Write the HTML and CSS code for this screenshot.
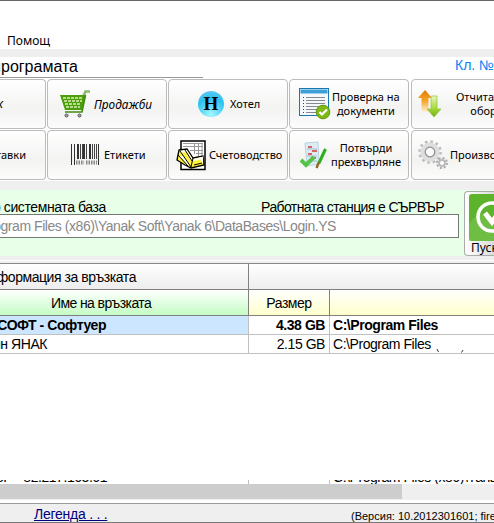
FILE: index.html
```html
<!DOCTYPE html>
<html lang="bg">
<head>
<meta charset="utf-8">
<title>Yanak Soft</title>
<link rel="stylesheet" href="styles.css">
</head>
<body>
<div class="window">
  <nav class="menu"><span>Помощ</span></nav>
  <div class="strip"></div>
  <header class="head">
    <div class="head-title"><span>програмата</span></div>
    <div class="client">Кл. №</div>
  </header>
  <section class="tools">
    <button class="tool first stock"><em>к</em></button>
    <button class="tool sales">
      <svg width="30" height="28" viewBox="0 0 30 28"><path d="M23.500 6L25.500 1.500H30" fill="none" stroke="#8dba66" stroke-width="2.600"/><path d="M0 5H26L22 20H5Z" fill="#4c9e0d"/><path d="M3 8H23M4 11H22M5 14H21M6 17H20" stroke="#d9f3b4" stroke-width="1.500" stroke-dasharray="3 1"/><path d="M5 22H22L25.500 5" fill="none" stroke="#438b10" stroke-width="1.600"/><circle cx="6.500" cy="25.500" r="1.500" fill="#aaa" stroke="#555"/><circle cx="19.500" cy="25.500" r="1.500" fill="#aaa" stroke="#555"/></svg>
      <em>Продажби</em></button>
    <button class="tool hotel">
      <span class="ball">H</span>
      <span>Хотел</span></button>
    <button class="tool check">
      <svg width="32" height="32" viewBox="0 0 32 32"><rect x=".5" y=".5" width="29" height="27" fill="#f5f8fa" stroke="#1878b0"/><rect x="1.500" y="1.500" width="27" height="4" fill="#3d9fd8"/><path d="M7 9.500H26M7 12.500H26M7 15.500H26M7 18.500H22M7 21.500H18M7 24.500H17" stroke="#85898d"/><path d="M4.500 9V26" stroke="#345" stroke-dasharray="1 2"/><circle cx="24" cy="24" r="6.800" fill="#7fba13" stroke="#5d9808"/><path d="M20.500 24l2.500 2.500 5-5" fill="none" stroke="#fff" stroke-width="2.200"/></svg>
      <span>Проверка на<br>документи</span></button>
    <button class="tool report">
      <svg width="24" height="30" viewBox="0 0 24 30"><defs><linearGradient id="o" x2="0" y2="1"><stop stop-color="#e07c00"/><stop offset=".5" stop-color="#f6a62c"/><stop offset="1" stop-color="#fff1d8"/></linearGradient><linearGradient id="g" x2="0" y2="1"><stop stop-color="#e9f6bf"/><stop offset=".6" stop-color="#a5d936"/><stop offset="1" stop-color="#6cae18"/></linearGradient></defs><path d="M7 1L14 9H10.500V23H3.500V9H0Z" fill="url(#o)"/><path d="M13 7H19V20H23L16 28L9 20H13Z" fill="url(#g)" stroke="#8fc23b" stroke-width=".7"/></svg>
      <span>Отчитане на<br>оборот</span></button>
    <button class="tool first"><span>Доставки</span></button>
    <button class="tool labels">
      <svg width="29" height="22" viewBox="0 0 29 22"><path d="M.5 0V21M3.500 0V21M27.500 0V21" stroke="#333"/><path d="M7 0V15M13 0V15M19 0V15" stroke="#333" stroke-width="2"/><path d="M9.500 0V15M11.500 0V15M15.500 0V15M21.500 0V15M23.500 0V15M25.500 0V15" stroke="#444"/><path d="M5 18.500H13M15 18.500H26" stroke="#888" stroke-width="4" stroke-dasharray="1.500 1"/></svg>
      <span>Етикети</span></button>
    <button class="tool account">
      <svg width="30" height="31" viewBox="0 0 30 31"><rect x="5" y="1" width="24" height="28.500" fill="#fff" stroke="#000" stroke-width="1.500"/><path d="M7 3.500H27M7 6.500H27M14 10.500H27M20 13.500H27M18.500 3V14M22.500 3V18M26 3V20" stroke="#999"/><path d="M3 10L11 9L17 18L27 16L28 25L15 28L9 25L1 20Z" fill="#fff23a" stroke="#000" stroke-width="1.300"/><path d="M5 12L10 11L16 20M3 18L7 17L13 25M18 20L26 18L26 23" fill="none" stroke="#fff" stroke-width="2.200"/><path d="M4 11L15 27L17 18M2 15l10 11M18 25l8-2M9 10l7 11" fill="none" stroke="#000"/></svg>
      <span>Счетоводство</span></button>
    <button class="tool confirm">
      <svg width="28" height="28" viewBox="0 0 28 28"><path d="M5 2L18 1L19 23L7 25Z" fill="#dcebf5" stroke="#a4c2d8" stroke-width=".7"/><path d="M8 6h4M12 10h5M8 13h4M11 17h5" stroke="#d43c2c" stroke-width="1.600"/><path d="M7 8h10M7 15h10M8 20h9" stroke="#a5bccb"/><path d="M1 19L6 24L14 16" fill="none" stroke="#55c446" stroke-width="4"/><path d="M25.500 8L19 22" stroke="#25b21c" stroke-width="3"/><path d="M19 21L16.500 27" stroke="#8b6a20" stroke-width="2.500"/></svg>
      <span>Потвърди<br>прехвърляне</span></button>
    <button class="tool produce">
      <svg width="32" height="30" viewBox="0 0 32 30"><circle cx="13" cy="12" r="10.500" fill="none" stroke="#bcbcbc" stroke-width="2.600" stroke-dasharray="2.600 2.900"/><circle cx="13" cy="12" r="7" fill="none" stroke="#dedede" stroke-width="5"/><circle cx="13" cy="12" r="4.800" fill="#fafafa" stroke="#8c8c8c" stroke-width="1.200"/><circle cx="25" cy="23" r="5" fill="none" stroke="#aaa" stroke-width="2" stroke-dasharray="2 1.900"/><circle cx="25" cy="23" r="3" fill="#fff" stroke="#bbb" stroke-width="2"/></svg>
      <span>Производство</span></button>
  </section>
  <section class="base">
    <div class="base-main">
      <div class="captions"><div class="base-name"><span>до системната база</span></div><span class="station">Работната станция е СЪРВЪР</span></div>
      <div class="path"><span>C:\Program Files (x86)\Yanak Soft\Yanak 6\DataBases\Login.YS</span></div>
    </div>
    <button class="start">
      <svg width="46" height="47" viewBox="0 0 46 47"><rect width="46" height="47" rx="3" fill="#5db32b"/><path d="M0 30Q10 14 22 24L40 47H0Z" fill="#84c85e" opacity=".5"/><circle cx="23" cy="23" r="14" fill="none" stroke="#fff" stroke-width="3.500"/><path d="M16 19L23 28L34 13" fill="none" stroke="#fff" stroke-width="5"/></svg>
      <span>Пускане</span></button>
  </section>
  <section class="grid">
    <div class="row bands"><div class="c1"><span>Информация за връзката</span></div><div class="rest"></div></div>
    <div class="row heads"><div class="c1 green"><span>Име на връзката</span></div><div class="c2"><span>Размер</span></div><div class="c3"></div></div>
    <div class="row data sel"><div class="c1"><b>ЯНАК СОФТ - Софтуер</b></div><div class="c2"><b>4.38 GB</b></div><div class="c3"><b>C:\Program Files</b></div></div>
    <div class="row data"><div class="c1"><span>Магазин ЯНАК</span></div><div class="c2">2.15 GB</div><div class="c3 tailed"><span>C:\Program Files</span><svg width="30" height="4" viewBox="0 0 30 4"><path d="M1 0L2.500 3M27 1L25.500 3.500" stroke="#333" fill="none"/></svg></div></div>
    <div class="blank"></div>
    <div class="row cut"><div class="c1"><span>СЪРВЪР - 82.217.163.61</span></div><div class="c2"></div><div class="c3"><span>C:\Program Files (x86)\Yanak</span></div></div>
  </section>
  <div class="scroll"><div class="thumb"></div></div>
  <footer class="foot"><a class="legend">Легенда . . .</a><span class="ver">(Версия: 10.2012301601; firebird</span></footer>
</div>
</body>
</html>
```
FILE: styles.css
```css
* { box-sizing: border-box; }
body { margin: 0; background: #fff; color: #000; font-family: "Liberation Sans", sans-serif; }
.window { width: 494px; height: 523px; overflow: hidden; background: #efefef; display: flex; flex-direction: column; }
.window span, .window b, .window em { white-space: nowrap; }
.menu { height: 49px; flex: none; border-top: 1px solid #666; background: #fff; padding: 32px 0 0 7px; font: 12px/16px "Noto Sans", sans-serif; }
.strip { height: 8px; flex: none; background: #efefef; }
.head { height: 22px; flex: none; background: #fff; display: flex; justify-content: space-between; }
.head-title { width: 203px; height: 21px; border-bottom: 1px solid #999; display: flex; justify-content: flex-end; padding-right: 125px; font-size: 16px; line-height: 20px; }
.client { width: 39px; font-size: 14px; line-height: 17px; color: #0a82f5; white-space: nowrap; }
.tools { height: 102px; flex: none; display: grid; grid-template-columns: 46px 120px 120px 120px 140px; grid-template-rows: 50px 50px; column-gap: 1px; row-gap: 1px; background: #fff; }
.tool { margin: 0; padding: 0; border: 1px solid #bcbcbc; border-radius: 4px; background: linear-gradient(#fff, #f3f3f2 60%, #fcfcfc); display: flex; align-items: center; font: 11px/14px "Noto Sans", sans-serif; color: #000; text-align: center; overflow: hidden; }
.tool svg { flex: none; }
.tool.first { border-left: 0; border-radius: 0 4px 4px 0; justify-content: flex-end; padding-right: 19px; }
.tool.stock { padding-right: 42px; font-size: 12px; }
.sales { padding-left: 12px; gap: 4px; font-size: 11.8px; }
.hotel { padding-left: 29px; gap: 6px; }
.ball { width: 26px; height: 26px; border-radius: 50%; background: radial-gradient(circle at 50% 90%, #a5f8ff, #2cc2ef 60%, #75c8f5); font: bold 19px/26px "Liberation Serif", serif; }
.check { padding-left: 9px; gap: 1px; }
.report { margin-left: 1px; padding-left: 6px; gap: 14px; }
.labels { padding-left: 23px; gap: 4px; }
.account { padding-left: 7px; gap: 3px; }
.confirm { padding-left: 10px; gap: 3px; }
.produce { margin-left: 1px; padding-left: 5px; gap: 1px; }
.base { height: 66px; flex: none; margin-top: 9px; background: #e8ffe8; display: flex; justify-content: space-between; }
.base-main { width: 459px; padding-top: 9px; }
.captions { display: flex; justify-content: space-between; font-size: 14px; letter-spacing: -.6px; line-height: 16px; height: 15px; padding-right: 15px; }
.base-name { width: 106px; display: flex; justify-content: flex-end; letter-spacing: -.4px; }
.path { height: 24px; border: 1px solid #777; border-left: 0; background: #fff; color: #888; font-size: 14px; letter-spacing: -.45px; line-height: 22px; display: flex; justify-content: flex-end; padding-right: 122px; }
.start { margin: 1px 0 0; width: 30px; height: 65px; padding: 2px 0 0 4px; border: 1px solid #aaa; border-right: 0; border-radius: 4px 0 0 4px; background: linear-gradient(90deg, #fff, #dcdcdc); overflow: hidden; display: flex; flex-direction: column; font: 12px/14px "Noto Sans", sans-serif; color: #000; flex: none; align-items: flex-start; }
.start svg { flex: none; }
.start span { padding-left: 2px; }
.grid { margin-top: 7px; height: 221px; flex: none; border-top: 1px solid #888; background: #fff; font-size: 14px; letter-spacing: -.45px; display: flex; flex-direction: column; box-shadow: 0 -2px #efefef, 0 -3px #fff; }
.row { display: grid; grid-template-columns: 249px 81px 164px; flex: none; }
.row > div { border-right: 1px solid #808080; overflow: hidden; }
.row > div:last-child { border-right: 0; }
.bands { height: 26px; line-height: 26px; grid-template-columns: 249px 245px; }
.bands > div, .heads > div { border-bottom: 1px solid #808080; }
.bands > div { background: linear-gradient(#fff, #ededed); }
.bands .c1 { display: flex; justify-content: flex-end; padding-right: 112px; }
.heads { height: 26px; line-height: 26px; text-align: center; }
.heads > div { background: linear-gradient(#fff, #ffffcc); }
.heads > .green { background: linear-gradient(#fff, #c4fcc4); text-align: left; padding-left: 51px; letter-spacing: -.6px; }
.data { height: 19px; line-height: 19px; }
.data > div { border-bottom: 1px solid #c0c0c0; border-right-color: #c0c0c0; white-space: nowrap; }
.data .c1 { display: flex; justify-content: flex-end; }
.sel .c1 { background: #cce6ff; padding-right: 142px; }
.data:not(.sel) .c1 { padding-right: 201px; }
.data .c2 { text-align: right; padding-right: 4px; }
.data .c3 { padding-left: 3px; }
.data .tailed { display: flex; align-items: flex-start; gap: 5px; }
.tailed svg { align-self: flex-end; }
.blank { height: 126px; flex: none; }
.cut { height: 4px; }
.cut > div { height: 4px; display: flex; align-items: flex-end; line-height: 13px; border-color: #c0c0c0; }
.cut .c1 { justify-content: flex-end; padding-right: 141px; }
.cut .c3 { padding-left: 3px; }
.scroll { height: 15px; flex: none; }
.thumb { height: 15px; width: 402px; background: #cdcdcd; }
.foot { height: 20px; flex: none; margin-top: 4px; border-top: 1px solid #999; border-bottom: 1px solid #777; box-shadow: 0 -3px #fff; display: flex; justify-content: space-between; }
.legend { margin-left: 34px; font-size: 14px; letter-spacing: -.25px; line-height: 20px; color: #000080; text-decoration: underline; }
.ver { width: 143px; font-size: 11px; line-height: 24px; }
```
